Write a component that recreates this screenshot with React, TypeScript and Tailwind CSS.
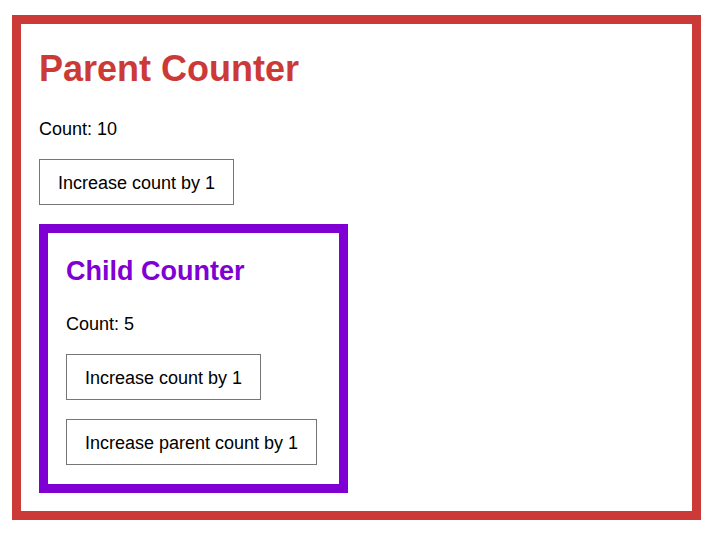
import React, { useState } from "react";

export default function App() {
  const [parent, setParent] = useState(10);
  const [child, setChild] = useState(5);
  const btn =
    "block h-[46px] border border-[#767676] bg-white pt-[2px] text-[18px] leading-[18px] text-black text-center";
  return (
    <div className="min-h-[533px] bg-white pt-[15px] pl-[12px]" style={{ fontFamily: '"Liberation Sans", Arial, sans-serif' }}>
      <div className="w-[689px] h-[505px] border-[9px] border-[#cc3a37] pl-[18px] pt-[27px]">
        <h1 className="text-[36px] leading-[36px] font-bold text-[#cc3a37]">Parent Counter</h1>
        <p className="mt-[33px] text-[18px] leading-[18px] text-black">Count: {parent}</p>
        <button className={btn + " mt-[21px] w-[195px]"} onClick={() => setParent(parent + 1)}>
          Increase count by 1
        </button>
        <div className="mt-[19px] w-[309px] h-[269px] border-[9px] border-[#8000d4] pl-[18px] pt-[25px]">
          <h2 className="text-[27px] leading-[27px] font-bold text-[#8000d4]">Child Counter</h2>
          <p className="mt-[30px] text-[18px] leading-[18px] text-black">Count: {child}</p>
          <button className={btn + " mt-[21px] w-[195px]"} onClick={() => setChild(child + 1)}>
            Increase count by 1
          </button>
          <button className={btn + " mt-[19px] w-[251px]"} onClick={() => setParent(parent + 1)}>
            Increase parent count by 1
          </button>
        </div>
      </div>
    </div>
  );
}
